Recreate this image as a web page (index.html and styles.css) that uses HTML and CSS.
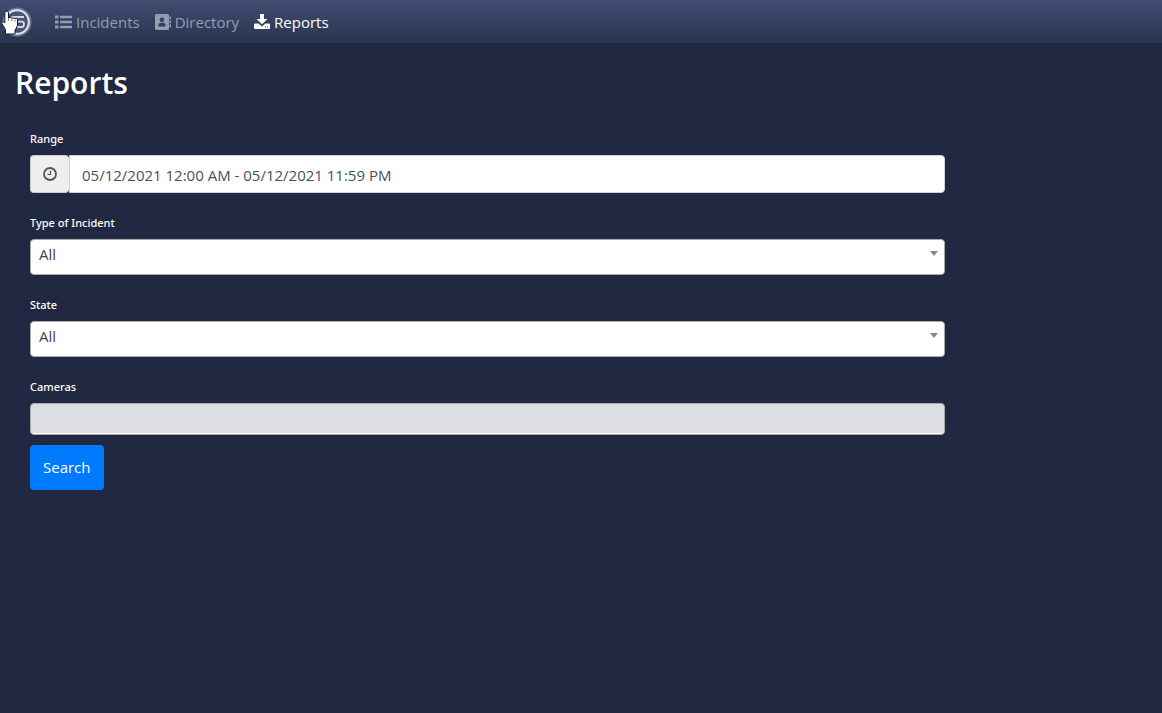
FILE: index.html
```
<!DOCTYPE html>
<html lang="en">
<head>
<meta charset="utf-8">
<title>Reports</title>
<link rel="stylesheet" href="styles.css">
</head>
<body>
<nav class="navbar">
  <a class="brand" href="#" aria-label="Home">
    <svg width="32" height="32" viewBox="0 0 32 32" fill="none">
      <circle cx="16" cy="16" r="14.500" fill="#6f7a95"/>
      <circle cx="16" cy="16" r="11.800" fill="#4a5675" stroke="#e4e7ee" stroke-width="2"/>
      <path d="M23 11H12.500q-2 0-2 2.300t2 2.300H21q2 0 2 2.700t-2 2.700H11" stroke="#d3d7e1" stroke-width="1.800"/>
    </svg>
  </a>
  <svg class="pointer" width="18" height="26" viewBox="0 0 18 26">
    <path d="M5.500 1.200C4.300 1.200 3.800 2 3.800 3V13L2.800 12C1.500 11 .2 12.200 1 13.700L4.500 19.500V24H14V20.500L16.500 15.500V9.500C16.500 8 14.500 7.800 14 9C13.700 7.600 11.300 7.400 10.900 8.600C10.400 7.200 8 7.200 7.500 8.300V3C7.500 2 6.800 1.200 5.500 1.200Z" fill="#fff" stroke="#10131d" stroke-width="1"/>
    <path d="M7.500 8V11M10.900 9V11.500M14 9.500V12" stroke="#8a8d96" fill="none"/>
  </svg>
  <a class="nav-link" href="#">
    <svg width="17" height="14" viewBox="0 0 17 14" fill="currentColor"><path d="M0 .5h3.500v3H0zM0 5.500h3.500v3H0zM0 10.500h3.500v3H0zM5 .8h12v2.400H5zM5 5.800h12v2.400H5zM5 10.800h12v2.400H5z"/></svg>
    <span>Incidents</span>
  </a>
  <a class="nav-link" href="#">
    <svg width="16" height="16" viewBox="0 0 16 16"><path fill="currentColor" fill-rule="evenodd" d="M1.500 0h11A1.500 1.500 0 0 1 14 1.500v13a1.500 1.500 0 0 1-1.500 1.500h-11A1.500 1.500 0 0 1 0 14.500v-13A1.500 1.500 0 0 1 1.500 0zM7 3.500a2.300 2.300 0 1 0 0 4.600 2.300 2.300 0 0 0 0-4.600zM3.500 12.500h7v-1.400c0-1.500-1-2.400-2.300-2.400H5.800c-1.300 0-2.300.9-2.300 2.400zM14.400 2.500H16v2.800h-1.600zM14.400 6.500H16v2.800h-1.600zM14.400 10.500H16v2.800h-1.600z"/></svg>
    <span>Directory</span>
  </a>
  <a class="nav-link active" href="#" aria-current="page">
    <svg width="16" height="15" viewBox="0 0 16 15" fill="currentColor"><path d="M6 0h4v5h3.500L8 10.300 2.500 5H6z"/><path fill-rule="evenodd" d="M1 9.500h3.500L8 12.500l3.500-3H15a1 1 0 0 1 1 1V14a1 1 0 0 1-1 1H1a1 1 0 0 1-1-1v-3.500a1 1 0 0 1 1-1zM11 12.500v1h1v-1zM13 12.500v1h1v-1z"/></svg>
    <span>Reports</span>
  </a>
</nav>
<main class="page">
  <h1 class="title">Reports</h1>
  <form class="filters">
    <div class="group">
      <label for="range">Range</label>
      <div class="input-group">
        <span class="addon">
          <svg width="14" height="14" viewBox="0 0 14 14" fill="none" stroke="#555"><circle cx="7" cy="7" r="6" stroke-width="1.800"/><path d="M7.500 3.500v4H4.500" stroke-width="1.200"/></svg>
        </span>
        <input id="range" class="range" type="text" value="05/12/2021 12:00 AM - 05/12/2021 11:59 PM">
      </div>
    </div>
    <div class="group">
      <label for="type">Type of Incident</label>
      <div class="select-wrap"><select id="type"><option>All</option></select></div>
    </div>
    <div class="group">
      <label for="state">State</label>
      <div class="select-wrap"><select id="state"><option>All</option></select></div>
    </div>
    <div class="group last">
      <label for="cameras">Cameras</label>
      <input id="cameras" class="cameras" type="text" disabled>
    </div>
    <button class="search" type="submit">Search</button>
  </form>
</main>
</body>
</html>
```
FILE: styles.css
```
* {
  box-sizing: border-box;
}

body {
  margin: 0;
  background: #212841;
  color: #fff;
  font-family: "Open Sans", "Noto Sans", sans-serif;
  font-size: 15px;
  line-height: 24px;
}

.navbar {
  position: relative;
  display: flex;
  align-items: center;
  gap: 15px;
  height: 43px;
  padding: 0 1px;
  background: linear-gradient(#404c71, #2a3550);
}

.brand {
  display: flex;
  margin-right: 7px;
}

.pointer {
  position: absolute;
  left: 1px;
  top: 10px;
}

.nav-link {
  display: flex;
  align-items: center;
  gap: 4px;
  color: #959caf;
  text-decoration: none;
}

.nav-link.active {
  color: #fff;
}

.page {
  padding: 20px 13px 0 15px;
}

.title {
  margin: 0;
  font-size: 30px;
  font-weight: 600;
  line-height: 40px;
}

.filters {
  width: 83.3333%;
  padding: 26px 15px 0;
}

.group {
  margin-bottom: 20px;
}

.group.last {
  margin-bottom: 10px;
}

label {
  display: block;
  margin-bottom: 6px;
  font-family: "Noto Sans", sans-serif;
  font-size: 11px;
  font-weight: 500;
  line-height: 20px;
}

input,
select,
button {
  font: inherit;
}

.input-group {
  display: flex;
  height: 38px;
}

.addon {
  display: flex;
  align-items: center;
  justify-content: center;
  width: 39px;
  background: #eee;
  border: 1px solid #ccc;
  border-right: 0;
  border-radius: 4px;
}

.range {
  flex: 1;
  min-width: 0;
  padding: 1px 12px 0;
  color: #495057;
  background: #fff;
  border: 1px solid #ced4da;
  border-radius: 0 4px 4px 0;
}

.select-wrap {
  position: relative;
}

.select-wrap::after {
  content: "";
  position: absolute;
  right: 7px;
  top: 12px;
  border: 4px solid transparent;
  border-top: 5px solid #888;
  border-bottom: 0;
  pointer-events: none;
}

select {
  display: block;
  width: 100%;
  height: 36px;
  padding: 0 20px 6px 8px;
  appearance: none;
  color: #444;
  background: #fff;
  border: 1px solid #aaa;
  border-radius: 4px;
}

.cameras {
  display: block;
  width: 100%;
  height: 32px;
  background: #dddee3;
  border: 1px solid #aaa;
  border-radius: 4px;
  box-shadow: inset 0 -1px #fff;
}

.search {
  display: block;
  height: 45px;
  padding: 0 13px 2px;
  color: #fff;
  background: #007bff;
  border: 0;
  border-radius: 4px;
}
```
